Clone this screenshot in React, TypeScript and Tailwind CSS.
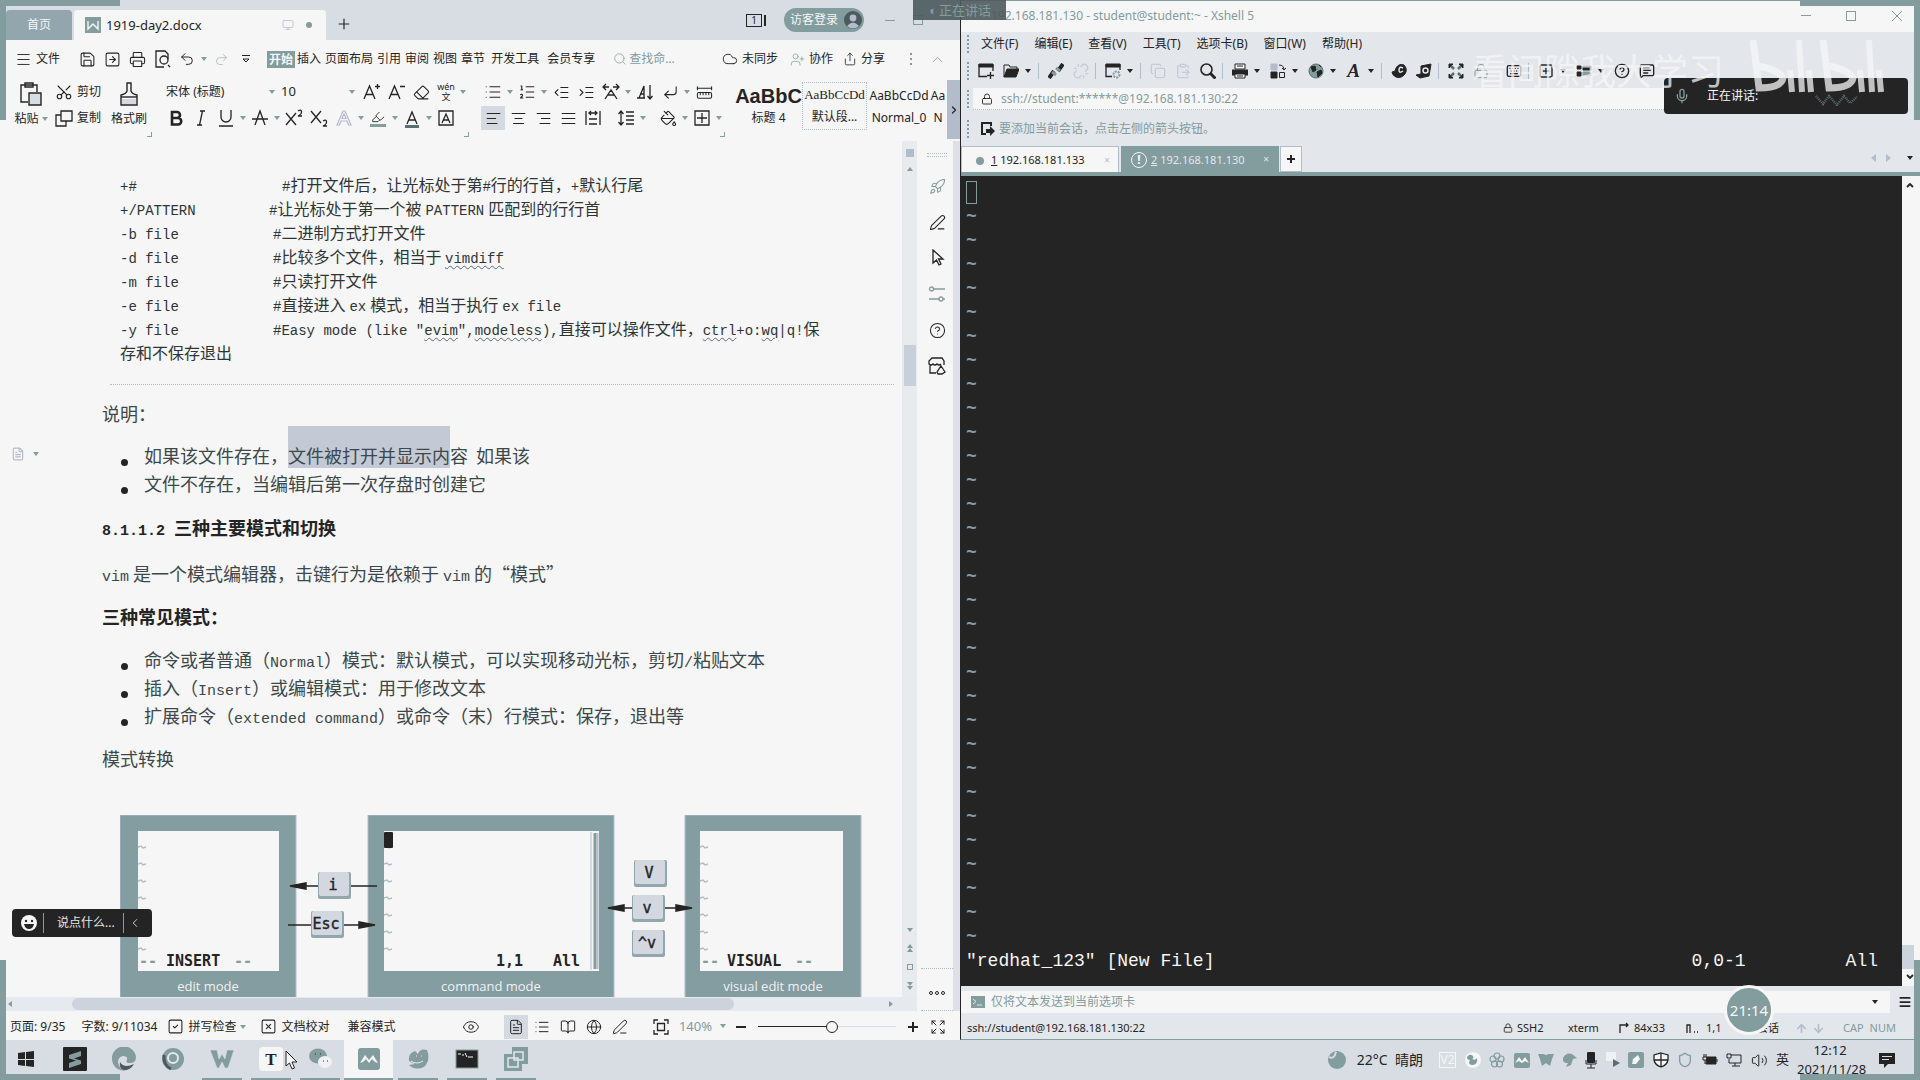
import React from "react";
import {
  AlignCenter, AlignJustify, AlignLeft, AlignRight, ArrowDown, ArrowUp, BookOpen,
  ChevronLeft, ChevronRight, ChevronUp, CircleHelp, ClipboardPaste, Cloud, Copy, CornerDownLeft,
  Eraser, Expand, Eye, FileText, Globe, Highlighter, IndentDecrease, IndentIncrease,
  Keyboard, List, ListOrdered, Lock, Menu, MessageSquareText, Mic, Monitor,
  PaintBucket, PenLine, Printer, Redo2, Rocket, RulerDimensionLine, Save, Scan,
  Scissors, Search, Share, Shield, SquareArrowRight, SquareCheck, SquarePlus, SquareX,
  Undo2, Unlink, UserPlus, Volume2,
} from "lucide-react";

type IconType = React.ComponentType<{ size?: number; strokeWidth?: number; className?: string }>;

function Caret({ dark = false }: { dark?: boolean }) {
  return (
    <svg width="6" height="4" viewBox="0 0 6 4" className={dark ? "shrink-0 text-[#242424]" : "shrink-0 text-[#839c9e]"}>
      <path d="M0 0h6L3 4z" fill="currentColor" />
    </svg>
  );
}

function Tool({ label, drop = false, active = false, children }: { label: string; drop?: boolean; active?: boolean; children: React.ReactNode }) {
  return (
    <button aria-label={label} className={drop ? "flex h-6 w-[34px] shrink-0 items-center" : "flex h-6 w-[25px] shrink-0 items-center"}>
      <span className={active ? "flex h-6 w-6 items-center justify-center bg-[#d5dae1]" : "flex h-6 w-6 items-center justify-center"}>{children}</span>
      {drop && <span className="flex w-2.5 justify-center"><Caret /></span>}
    </button>
  );
}

function Ic({ icon: I, size = 17, className }: { icon: IconType; size?: number; className?: string }) {
  return <I size={size} strokeWidth={1.5} className={className} />;
}

function Letter({ d, children }: { d?: string; children?: React.ReactNode }) {
  return (
    <svg width="18" height="18" viewBox="0 0 18 18" fill="none" stroke="currentColor" strokeWidth="1.3">
      {d && <path d={d} />}
      {children}
    </svg>
  );
}

function Corner() {
  return <span className="-ml-1 h-[5px] w-[5px] shrink-0 self-end border-b border-r border-[#839c9e]" />;
}

function TabStrip() {
  return (
    <div className="flex h-10 items-end bg-[#d8dce3]">
      <button className="ml-1.5 h-[30px] w-[66px] rounded-t-sm bg-[#93a6ad] text-xs text-[#f6f6f6]">首页</button>
      <div className="ml-0.5 flex h-[30px] w-[252px] items-center rounded-t-sm bg-[#f6f6f6] pl-[11px] pr-3.5">
        <svg width="16" height="16" viewBox="0 0 16 16">
          <rect width="16" height="16" fill="#839c9e" />
          <path d="M3 4v8l5-5 5 5V4" fill="none" stroke="#f6f6f6" strokeWidth="1.4" />
        </svg>
        <span className="ml-[5px] flex-1 text-[13px] leading-5">1919-day2.docx</span>
        <Monitor size={12} strokeWidth={1.5} className="text-[#b3bccb]" />
        <span className="ml-3 h-1.5 w-1.5 rounded-full bg-[#839c9e]" />
      </div>
      <button aria-label="新建标签" className="ml-2.5 mb-2 flex h-4 w-4 items-center justify-center">
        <Letter d="M9 3v12M3 9h12" />
      </button>
      <div className="ml-auto flex h-10 items-center pr-[37px]">
        <span className="flex h-[13px] w-4 items-center justify-center border border-[#242424] text-[10px] leading-none">1</span>
        <span className="mr-[18px] ml-0.5 h-[11px] w-0.5 border-x border-[#242424]" />
        <button className="flex h-6 w-20 items-center rounded-full bg-[#839c9e] pl-1.5 text-xs text-[#f6f6f6]">
          访客登录
          <svg width="18" height="18" viewBox="0 0 18 18" className="ml-1.5">
            <circle cx="9" cy="9" r="9" fill="#4c5a5c" />
            <circle cx="9" cy="7" r="3.4" fill="#b3bccb" />
            <path d="M3 15q6-7 12 0-6 5-12 0z" fill="#b3bccb" />
          </svg>
        </button>
        <button aria-label="最小化" className="ml-[21px] h-px w-2.5 bg-[#839c9e]" />
        <button aria-label="最大化" className="ml-[18px] h-2.5 w-2.5 border border-[#839c9e]" />
      </div>
    </div>
  );
}

function WpsMenu() {
  return (
    <div className="flex h-[38px] items-center whitespace-nowrap text-xs">
      <button className="ml-[15px] flex items-center gap-1"><Menu size={17} strokeWidth={1.3} />文件</button>
      <div className="ml-[15px] flex items-center">
        <Tool label="保存"><Ic icon={Save} /></Tool>
        <Tool label="输出为PDF"><Ic icon={SquareArrowRight} /></Tool>
        <Tool label="打印"><Ic icon={Printer} /></Tool>
        <Tool label="打印预览">
          <Letter d="M11 17H3V1h9l3 3v5M15 15l2 2"><circle cx="11" cy="10" r="4" /></Letter>
        </Tool>
        <Tool label="撤销" drop><Ic icon={Undo2} size={16} /></Tool>
        <Tool label="恢复"><Ic icon={Redo2} size={15} className="text-[#b3bccb]" /></Tool>
        <Tool label="更多命令">
          <svg width="10" height="10" viewBox="0 0 10 10" fill="none" stroke="#242424"><path d="M1 1.500h8M2 5l3 3 3-3z" /></svg>
        </Tool>
      </div>
      <nav className="ml-2 flex items-center gap-1">
        <button className="-mr-0.5 bg-[#839c9e] px-0.5 font-bold leading-[17px] text-[#f6f6f6]">开始</button>
        {["插入", "页面布局", "引用", "审阅", "视图", "章节"].map((t) => <button key={t}>{t}</button>)}
        <button className="ml-0.5">开发工具</button>
        <button className="ml-1">会员专享</button>
      </nav>
      <label className="ml-[18px] flex items-center gap-0.5 text-[#839c9e]">
        <Search size={14} strokeWidth={1.3} />
        <input aria-label="查找命令" placeholder="查找命..." className="w-[52px] bg-transparent outline-none placeholder:text-[#839c9e]" />
      </label>
      <div className="ml-auto flex items-center pr-[14px]">
        <button className="flex items-center gap-1"><Cloud size={16} strokeWidth={1.4} />未同步</button>
        <button className="ml-3 flex items-center gap-1"><UserPlus size={15} strokeWidth={1.2} className="text-[#839c9e]" />协作</button>
        <button className="ml-2.5 flex items-center gap-1"><Share size={14} strokeWidth={1.4} />分享</button>
        <span className="ml-[25px] flex flex-col gap-[3px]">
          {[0, 1, 2].map((i) => <i key={i} className="h-0.5 w-0.5 bg-[#839c9e]" />)}
        </span>
        <button aria-label="收起" className="ml-[17px]"><ChevronUp size={17} strokeWidth={1.2} className="text-[#839c9e]" /></button>
      </div>
    </div>
  );
}

function Ribbon() {
  return (
    <div className="flex h-[63px] items-start pt-0.5 text-xs">
      <div className="flex h-[57px] pl-[13px]">
        <div className="flex w-9 flex-col items-center">
          <button aria-label="粘贴" className="flex h-7 items-center">
            <svg width="22" height="24" viewBox="0 0 22 24" fill="none" stroke="currentColor" strokeWidth="1.4">
              <path d="M8 20H1V3h16v7M5 5V1h8v4z" />
              <path d="M9 11h12v12H9z" fill="#d8dce3" />
            </svg>
          </button>
          <button className="flex items-center gap-[3px] whitespace-nowrap leading-[22px]">粘贴<Caret /></button>
        </div>
        <div className="ml-1.5 flex flex-col gap-0.5">
          <button className="flex h-6 items-center gap-1"><Scissors size={18} strokeWidth={1.5} className="-rotate-90" />剪切</button>
          <button className="flex h-6 items-center gap-1"><Letter d="M6 2h11v10H6zM6 6H1v11h10v-5" />复制</button>
        </div>
        <button className="ml-2.5 flex w-9 flex-col items-center">
          <span className="flex h-7 items-center">
            <svg width="20" height="24" viewBox="0 0 20 24" fill="none" stroke="currentColor" strokeWidth="1.4">
              <path d="M8 1h4v8q1 3 6 4v10H2V13q5-1 6-4z" />
              <path d="M2 15h16" />
              <path d="M3 17h14v5H3z" fill="#d5dae1" stroke="none" />
            </svg>
          </span>
          <span className="whitespace-nowrap leading-[22px]">格式刷</span>
        </button>
        <span className="w-1" />
        <Corner />
      </div>

      <div className="ml-2.5 flex h-[57px]">
        <div className="flex flex-col gap-0.5">
          <div className="flex h-6 items-center">
            <button className="flex w-[117px] items-center justify-between pl-1 pr-1">宋体 (标题)<Caret /></button>
            <button className="flex w-20 items-center justify-between pl-0.5 pr-1 text-[13px]">10<Caret /></button>
            <Tool label="增大字号"><Letter d="M2 16L7.500 3 13 16M4 11.500h7M15.500 1v5M13 3.500h5" /></Tool>
            <Tool label="减小字号"><Letter d="M2 16L7.500 3 13 16M4 11.500h7M13 3.500h5" /></Tool>
            <Tool label="清除格式"><Ic icon={Eraser} /></Tool>
            <Tool label="拼音指南" drop>
              <span className="flex flex-col items-center text-[9px] leading-[10px]"><span>wén</span><span>文</span></span>
            </Tool>
          </div>
          <div className="flex h-6 items-center pl-0.5">
            <Tool label="加粗"><Letter><path d="M5 3h5a3 3 0 010 6H5zM5 9h6a3 3 0 010 6.500H5z" strokeWidth="2.600" /></Letter></Tool>
            <Tool label="斜体"><Letter d="M8 2h5M5 16h5M10.500 2l-3 14" /></Tool>
            <Tool label="下划线" drop><Letter d="M4 1v7a5 5 0 0010 0V1M2 17h14" /></Tool>
            <Tool label="删除线" drop><Letter d="M4 16L9 2l5 14M1 10h16" /></Tool>
            <Tool label="上标"><Letter d="M1 4l10 12M11 4L1 16M13 2q3-2 3.500.5T13 7h4" /></Tool>
            <Tool label="下标"><Letter d="M1 2l10 12M11 2L1 14M13 12q3-2 3.500.5T13 17h4" /></Tool>
            <Tool label="文字效果" drop>
              <svg width="16" height="16" viewBox="0 0 16 16" fill="none" stroke="#b3bccb" strokeWidth="1.2"><path d="M1 15L7 1h2l6 14h-2.500l-1.500-4H5l-1.500 4zM6 8.500h4L8 4z" /></svg>
            </Tool>
            <Tool label="突出显示" drop>
              <span className="flex flex-col items-center"><Ic icon={Highlighter} size={14} /><i className="h-[3px] w-4 bg-[#839c9e]" /></span>
            </Tool>
            <Tool label="字体颜色" drop>
              <span className="flex flex-col items-center"><Letter d="M4 15L9 3l5 12M6 11h6" /><i className="-mt-0.5 h-[3px] w-3.5 bg-[#5b6d70]" /></span>
            </Tool>
            <Tool label="字符边框"><Letter d="M2 2h14v14H2zM5 14l4-9 4 9M6.500 11h5" /></Tool>
          </div>
        </div>
        <Corner />
      </div>

      <div className="ml-3 flex h-[57px]">
        <div className="flex flex-col gap-0.5">
          <div className="flex h-6 items-center">
            <Tool label="项目符号" drop><Ic icon={List} size={18} /></Tool>
            <Tool label="编号" drop><Ic icon={ListOrdered} size={18} /></Tool>
            <Tool label="减少缩进"><Ic icon={IndentDecrease} /></Tool>
            <Tool label="增加缩进"><Ic icon={IndentIncrease} /></Tool>
            <Tool label="中文版式" drop><Letter d="M1 4h6M4 1L1 4l3 3M11 4h6M14 1l3 3-3 3M3 16L9 7l6 9M6 12h6" /></Tool>
            <Tool label="排序"><Letter d="M3 15L8 3v12zM4 11h4M14 2v14M11.500 13l2.500 3 2.500-3M1 15h8" /></Tool>
            <Tool label="换行" drop><Ic icon={CornerDownLeft} /></Tool>
            <Tool label="标尺"><Ic icon={RulerDimensionLine} /></Tool>
          </div>
          <div className="flex h-6 items-center">
            <Tool label="左对齐" active><Ic icon={AlignLeft} /></Tool>
            <Tool label="居中"><Ic icon={AlignCenter} /></Tool>
            <Tool label="右对齐"><Ic icon={AlignRight} /></Tool>
            <Tool label="两端对齐"><Ic icon={AlignJustify} /></Tool>
            <Tool label="分散对齐"><Letter d="M2 2v14M16 2v14M5 4h8M7 2L5 4l2 2M11 2l2 2-2 2M5 10h8M5 15h8" /></Tool>
            <span className="w-2" />
            <Tool label="行距" drop><Letter d="M4 2v14M1.500 5L4 2l2.500 3M1.500 13L4 16l2.500-3M9 3h8M9 7h8M9 11h8M9 15h8" /></Tool>
            <span className="w-2" />
            <Tool label="底纹" drop><Ic icon={PaintBucket} /></Tool>
            <Tool label="边框" drop><Letter d="M2 2h14v14H2zM9 4v10M4 9h10" /></Tool>
          </div>
        </div>
        <Corner />
      </div>

      <div className="ml-2.5 flex h-[50px] min-w-0 flex-1 overflow-hidden pt-0.5">
        {[
          { s: "AaBbC", n: "标题 4", c: "font-['Liberation_Sans'] text-xl font-bold", w: "w-[67px]" },
          { s: "AaBbCcDd", n: "默认段...", c: "font-['Liberation_Serif'] text-[13px]", w: "w-[65px] border border-dotted border-[#b3bccb]" },
          { s: "AaBbCcDd", n: "Normal_0", c: "text-xs", w: "w-16" },
          { s: "Aa", n: "N", c: "text-xs", w: "w-3.5" },
        ].map((x, i) => (
          <button key={i} className={`flex h-12 shrink-0 flex-col items-center ${x.w}`}>
            <span className={`flex h-[26px] items-end leading-5 ${x.c}`}>{x.s}</span>
            <span className="whitespace-nowrap leading-6">{x.n}</span>
          </button>
        ))}
      </div>
      <button aria-label="展开" className="flex h-[59px] w-[13px] items-center justify-center bg-[#b3bccb]"><ChevronRight size={12} strokeWidth={2.5} /></button>
    </div>
  );
}

function Mixed({ text, small = false }: { text: string; small?: boolean }) {
  const parts = text.split(/([\x20-\x7e]+)/).filter(Boolean);
  return (
    <>
      {parts.map((p, i) => {
        if (!/^[\x20-\x7e]/.test(p)) return <React.Fragment key={i}>{p}</React.Fragment>;
        const before = i > 0 && /[\u4e00-\u9fff]$/.test(parts[i - 1]) && /^[A-Za-z]/.test(p);
        const after = i < parts.length - 1 && /^[\u4e00-\u9fff]/.test(parts[i + 1]) && /[A-Za-z]$/.test(p);
        return (
          <span key={i} className={`whitespace-pre font-['Liberation_Mono'] leading-none ${small ? "text-sm" : "text-[15px]"} ${before ? "ml-1" : ""} ${after ? "mr-1" : ""}`}>{p}</span>
        );
      })}
    </>
  );
}

function Wavy({ children }: { children: string }) {
  return <span className="font-['Liberation_Mono'] text-sm leading-none underline decoration-[#5b6d70] decoration-wavy decoration-1 underline-offset-2">{children}</span>;
}

function CodeRow({ cmd, w = "w-[153px]", children }: { cmd: string; w?: string; children: React.ReactNode }) {
  return (
    <div className="flex h-6 items-baseline">
      <span className={`${w} shrink-0 whitespace-pre font-['Liberation_Mono'] text-sm`}>{cmd}</span>
      <span className="whitespace-nowrap">{children}</span>
    </div>
  );
}

function Bullet({ children }: { children: React.ReactNode }) {
  return (
    <li className="flex h-7 items-center">
      <span className="mr-4 mt-3.5 h-[7px] w-[7px] shrink-0 rounded-full bg-[#242424]" />
      <span className="whitespace-nowrap">{children}</span>
    </li>
  );
}

function KeyCap({ x, y, label }: { x: number; y: number; label: string }) {
  return (
    <g>
      <rect x={x} y={y} width="33" height="27" rx="2" fill="#92a7ad" />
      <rect x={x + 1} y={y} width="30" height="24" rx="2" fill="#d3d8e0" />
      <text x={x + 15} y={y + 18} textAnchor="middle" fontSize="15" fill="#242424" stroke="#242424" strokeWidth="0.4">{label}</text>
    </g>
  );
}

function ModeBox({ x, w, inner, iw, label }: { x: number; w: number; inner: number; iw: number; label: string }) {
  return (
    <g>
      <rect x={x} y="0" width={w} height="190" fill="#849da0" stroke="#b3bccb" />
      <rect x={inner} y="16" width={iw} height="140" fill="#f6f6f6" />
      {[0, 1, 2, 3, 4, 5, 6].map((i) => (
        <path key={i} d={`M${inner} ${32 + i * 17}l3-1 2 2 3-1`} fill="none" stroke="#b3bccb" strokeWidth="1.5" />
      ))}
      <text x={x + w / 2} y="176" textAnchor="middle" fontSize="13" fill="#f0f1f4" fontFamily="Open Sans">{label}</text>
    </g>
  );
}

function ModeDiagram() {
  return (
    <svg width="742" height="184" viewBox="0 0 742 184" className="shrink-0 font-['DejaVu_Sans_Mono']">
      <ModeBox x={0} w={176} inner={18} iw={141} label="edit mode" />
      <ModeBox x={248} w={246} inner={264} iw={215} label="command mode" />
      <ModeBox x={565} w={176} inner={580} iw={143} label="visual edit mode" />
      <path d="M471 17v138" stroke="#b3bccb" />
      <path d="M475 18v136" stroke="#839c9e" strokeWidth="3" />
      <path d="M477.500 18v136" stroke="#b3bccb" strokeWidth="2" />
      <rect x="264" y="17" width="9" height="16" rx="1" fill="#242424" />
      <g fontSize="15" fontWeight="bold" fill="#242424">
        <text x="19" y="151" fill="#839c9e">--</text>
        <text x="46" y="151">INSERT</text>
        <text x="114" y="151" fill="#839c9e">--</text>
        <text x="376" y="151">1,1</text>
        <text x="433" y="151">All</text>
        <text x="581" y="151" fill="#839c9e">--</text>
        <text x="607" y="151">VISUAL</text>
        <text x="675" y="151" fill="#839c9e">--</text>
      </g>
      <g stroke="#242424" strokeWidth="1.5" fill="#242424">
        <path d="M180 71h77M168 110h76M498 93h64" />
        <path d="M170 71l16-3v6zM255 110l-16-3v6zM488 93l16-3v6zM572 93l-16-3v6z" />
      </g>
      <KeyCap x={198} y={57} label="i" />
      <KeyCap x={191} y={96} label="Esc" />
      <KeyCap x={514} y={45} label="V" />
      <KeyCap x={512} y={80} label="v" />
      <KeyCap x={512} y={115} label="^v" />
    </svg>
  );
}

function DocumentPage() {
  return (
    <article className="relative flex min-h-0 flex-1 flex-col overflow-hidden pl-[102px] pt-[31px] font-['Noto_Sans_CJK_SC',sans-serif] text-lg leading-7 text-[#3c484b]">
      <div className="pl-[18px] text-base leading-6 text-[#2e3537]">
        <CodeRow cmd="+#" w="w-[162px]"><Mixed small text="#打开文件后，让光标处于第#行的行首，+默认行尾" /></CodeRow>
        <CodeRow cmd="+/PATTERN" w="w-[149px]"><Mixed small text="#让光标处于第一个被PATTERN匹配到的行行首" /></CodeRow>
        <CodeRow cmd="-b file"><Mixed small text="#二进制方式打开文件" /></CodeRow>
        <CodeRow cmd="-d file"><Mixed small text="#比较多个文件，相当于" /> <Wavy>vimdiff</Wavy></CodeRow>
        <CodeRow cmd="-m file"><Mixed small text="#只读打开文件" /></CodeRow>
        <CodeRow cmd="-e file"><Mixed small text="#直接进入ex模式，相当于执行ex file" /></CodeRow>
        <CodeRow cmd="-y file">
          <Mixed small text={'#Easy mode (like "'} /><Wavy>evim</Wavy><Mixed small text={'",'} /><Wavy>modeless</Wavy>
          <Mixed small text="),直接可以操作文件，" /><Wavy>ctrl</Wavy><Mixed small text="+o:" /><Wavy>wq</Wavy><Mixed small text="|q!保" />
        </CodeRow>
        <p>存和不保存退出</p>
      </div>
      <hr className="mr-2 ml-2 mt-5 border-dotted border-[#b3bccb]" />
      <p className="mt-3.5">说明：</p>
      <ul className="mt-3.5 pl-[19px]">
        <Bullet>如果该文件存在，<span className="bg-[#c3cad6] pt-4">文件被打开并显示内</span>容&nbsp; 如果该</Bullet>
        <Bullet>文件不存在，当编辑后第一次存盘时创建它</Bullet>
      </ul>
      <h3 className="mt-4 h-7 font-bold text-[#242424]"><Mixed text="8.1.1.2 三种主要模式和切换" /></h3>
      <p className="mt-[18px] h-7"><Mixed text="vim是一个模式编辑器，击键行为是依赖于vim的“模式”" /></p>
      <h4 className="mt-[15px] font-bold text-[#242424]">三种常见模式：</h4>
      <ul className="mt-[15px] pl-[19px]">
        <Bullet><Mixed text="命令或者普通（Normal）模式：默认模式，可以实现移动光标，剪切/粘贴文本" /></Bullet>
        <Bullet><Mixed text="插入（Insert）或编辑模式：用于修改文本" /></Bullet>
        <Bullet><Mixed text="扩展命令（extended command）或命令（末）行模式：保存，退出等" /></Bullet>
      </ul>
      <p className="mt-[15px]">模式转换</p>
      <div className="mt-[43px] pl-[18px]"><ModeDiagram /></div>
      <span className="absolute left-[11px] top-[306px] flex items-center gap-2 text-[#b3bccb]">
        <FileText size={14} strokeWidth={2} /><Caret />
      </span>
    </article>
  );
}

function Sliders() {
  return (
    <Letter>
      <circle cx="3.500" cy="4" r="2" /><path d="M5.500 4H17M1 14h10M15 14h2" /><circle cx="13" cy="14" r="2" />
    </Letter>
  );
}

function SideTools() {
  const items: [string, React.ReactNode, string][] = [
    ["推荐功能", <Ic icon={Rocket} />, "text-[#839c9e]"],
    ["样式", <Ic icon={PenLine} />, ""],
    ["选择", <Letter d="M5 1v13l3.500-3 2.500 5 2-1-2.500-5H15z" />, ""],
    ["属性", <Sliders />, "text-[#839c9e]"],
    ["帮助", <Ic icon={CircleHelp} />, ""],
    ["更多应用", <Letter d="M8 16H2V7M16 8V4l-2-3H4L1 4v3q2 2 4 0 2 2 4 0 2 2 4 0M13 9l4 6-3 2h-4l-1-2z" />, ""],
  ];
  return (
    <aside className="flex w-9 flex-col items-center pl-1">
      <span className="mt-3 h-1 w-5 border-y border-dotted border-[#b3bccb]" />
      <div className="mt-[11px] flex flex-col">
        {items.map(([label, art, c]) => (
          <button key={label} aria-label={label} className={`flex h-9 w-8 items-center justify-center ${c}`}>{art}</button>
        ))}
      </div>
      <button aria-label="更多" className="mt-auto flex h-[43px] w-full items-center justify-center gap-0.5 border-y border-dotted border-[#b3bccb] pt-1.5">
        {[0, 1, 2].map((i) => <i key={i} className="h-1 w-1 rounded-full border border-[#242424]" />)}
      </button>
    </aside>
  );
}

function WpsStatus() {
  return (
    <footer className="flex h-[29px] items-center whitespace-nowrap pl-2.5 pt-0.5 text-xs">
      <span>页面: 9/35</span>
      <span className="ml-4">字数: 9/11034</span>
      <button className="ml-2.5 flex items-center gap-1"><Ic icon={SquareCheck} />拼写检查<Caret /></button>
      <button className="ml-3.5 flex items-center gap-1"><Ic icon={SquareX} />文档校对</button>
      <span className="ml-[18px]">兼容模式</span>
      <div className="ml-auto flex items-center pr-3.5">
        <Eye size={18} strokeWidth={1.3} />
        <span className="ml-6 flex items-center gap-px">
          <Tool label="页面视图" active><Ic icon={FileText} size={16} /></Tool>
          <Tool label="大纲"><Ic icon={List} size={16} /></Tool>
          <Tool label="阅读版式"><Ic icon={BookOpen} size={16} /></Tool>
          <Tool label="Web版式"><Ic icon={Globe} size={16} /></Tool>
          <Tool label="写作模式"><Ic icon={PenLine} size={16} /></Tool>
        </span>
        <span className="ml-5">
          <svg width="16" height="16" viewBox="0 0 16 16" fill="none" stroke="#242424" strokeWidth="1.3"><path d="M1 5V1h4M11 1h4v4M15 11v4h-4M5 15H1v-4M4.500 4.500h7v7h-7z" /></svg>
        </span>
        <button className="ml-2.5 flex items-center gap-2 text-[13px] text-[#839c9e]">140%<Caret /></button>
        <button aria-label="缩小" className="ml-2.5 h-0.5 w-2.5 bg-[#242424]" />
        <input
          aria-label="缩放"
          type="range"
          defaultValue={54}
          className="ml-3 h-3 w-[138px] appearance-none bg-[linear-gradient(to_right,#242424_50%,#d8dce3_50%)] bg-[length:100%_1px] bg-center bg-no-repeat [&::-webkit-slider-thumb]:h-3 [&::-webkit-slider-thumb]:w-3 [&::-webkit-slider-thumb]:appearance-none [&::-webkit-slider-thumb]:rounded-full [&::-webkit-slider-thumb]:border [&::-webkit-slider-thumb]:border-[#242424] [&::-webkit-slider-thumb]:bg-[#f6f6f6]"
        />
        <button aria-label="放大" className="ml-2"><Letter><path d="M9 4v10M4 9h10" strokeWidth="2" /></Letter></button>
        <button aria-label="全屏" className="ml-2"><Ic icon={Expand} size={16} /></button>
      </div>
    </footer>
  );
}

function WriterWindow() {
  return (
    <section className="relative flex w-1/2 flex-col bg-[#f6f6f6]">
      <TabStrip />
      <WpsMenu />
      <Ribbon />
      <div className="flex min-h-0 flex-1">
        <div className="flex min-w-0 flex-1 flex-col">
          <div className="flex min-h-0 flex-1">
            <DocumentPage />
            <div className="flex w-[15px] flex-col items-center bg-[#e8eaee] text-[#839c9e]">
              <span className="mt-2 h-2 w-2 bg-[#b3bccb]" />
              <span className="mt-2.5 rotate-180"><Caret /></span>
              <span className="mt-[174px] h-[41px] w-3 bg-[#c9cfd9]" />
              <span className="mt-auto mb-[7px] flex flex-col items-center gap-3">
                <Caret />
                <span className="rotate-180"><Caret /><Caret /></span>
                <i className="h-1.5 w-1.5 border border-[#839c9e]" />
                <span><Caret /><Caret /></span>
              </span>
            </div>
          </div>
          <div className="flex h-3.5 items-center bg-[#e6e9ed] pl-2 pr-6">
            <i className="border-y-[3px] border-r-4 border-y-transparent border-r-[#839c9e]" />
            <span className="ml-[60px] h-3 w-[662px] rounded-full bg-[#cdd3dc]" />
            <i className="ml-auto border-y-[3px] border-l-4 border-y-transparent border-l-[#839c9e]" />
          </div>
        </div>
        <SideTools />
        <span className="w-[7px] bg-[#dde1e7]" />
      </div>
      <WpsStatus />
      <div className="absolute bottom-[103px] left-3 flex h-7 items-center rounded-sm bg-[#242424] text-xs text-[#e4e6ea]">
        <svg width="16" height="16" viewBox="0 0 16 16" className="ml-[9px]">
          <circle cx="8" cy="8" r="8" fill="#f6f6f6" />
          <path d="M3 9h10q-1 5-5 5T3 9z" fill="#242424" />
          <circle cx="5" cy="6" r="1.200" fill="#242424" /><circle cx="11" cy="6" r="1.200" fill="#242424" />
        </svg>
        <i className="ml-1.5 h-5 w-px bg-[#839c9e]" />
        <button className="ml-[13px]">说点什么...</button>
        <i className="ml-2 h-5 w-px bg-[#839c9e]" />
        <button aria-label="收起" className="ml-1 mr-2.5"><ChevronLeft size={14} strokeWidth={1.5} /></button>
      </div>
    </section>
  );
}

function XTool({ label, icon: I, drop = false, faint = false, children }: { label: string; icon?: IconType; drop?: boolean; faint?: boolean; children?: React.ReactNode }) {
  return (
    <button aria-label={label} className={drop ? "flex w-[38px] shrink-0 items-center" : "flex w-[25px] shrink-0 items-center"}>
      <span className="flex w-[25px] justify-center">{I ? <I size={16} strokeWidth={2} className={faint ? "text-[#c6ccd7]" : ""} /> : children}</span>
      {drop && <span className="flex w-2.5 justify-center"><Caret dark /></span>}
    </button>
  );
}

function Sep() {
  return <span className="mr-1 ml-0.5 h-4 w-px shrink-0 bg-[#b3bccb]" />;
}

function Grip() {
  return <span className="ml-1.5 mr-1 h-[18px] w-0.5 shrink-0 border-l-2 border-dotted border-[#839c9e]" />;
}

function Glyph({ children }: { children: React.ReactNode }) {
  return <svg width="16" height="16" viewBox="0 0 16 16" fill="none" stroke="#242424">{children}</svg>;
}

function ShellWindow() {
  return (
    <section className="relative flex w-1/2 flex-col border-b border-l border-b-[#839c9e] border-l-[#242424] bg-[#e3e6eb] text-xs">
      <header className="flex h-8 items-center border-t border-[#839c9e] bg-[#f6f6f6] pb-0.5 pl-[30px] pr-[18px] text-[#839c9e]">
        <h1 className="flex-1">192.168.181.130 - student@student:~ - Xshell 5</h1>
        <button aria-label="最小化" className="h-px w-2.5 bg-[#839c9e]" />
        <button aria-label="最大化" className="ml-[35px] h-2.5 w-2.5 border border-[#839c9e]" />
        <button aria-label="关闭" className="ml-9">
          <svg width="10" height="10" viewBox="0 0 10 10" stroke="#839c9e"><path d="M0 0l10 10M10 0L0 10" /></svg>
        </button>
      </header>
      <div className="flex h-6 items-center">
        <Grip />
        <nav className="ml-2 flex gap-4">
          {["文件(F)", "编辑(E)", "查看(V)", "工具(T)", "选项卡(B)", "窗口(W)", "帮助(H)"].map((t) => <button key={t}>{t}</button>)}
        </nav>
      </div>
      <div className="flex h-[30px] items-center">
        <Grip />
        <XTool label="新建会话"><Glyph><path d="M9 13.500H1V2h14v6M12.500 9v7M9 12.500h7" strokeWidth="1.300" /><path d="M1 1h14v3H1z" fill="#242424" /></Glyph></XTool>
        <XTool label="打开" drop><Glyph><path d="M1 14V2h5l1 2h7v2" /><path d="M4 6h12l-3 8H1z" fill="#242424" /></Glyph></XTool>
        <Sep />
        <XTool label="重新连接"><Glyph><path d="M1 15L6 8M10 8l5-7" strokeWidth="4" /><path d="M4 9l4 3M8 5l4 3" stroke="#839c9e" strokeWidth="3" /></Glyph></XTool>
        <XTool label="断开" icon={Unlink} faint />
        <Sep />
        <XTool label="属性" drop><Glyph><path d="M7 13.500H1V2h14v5" strokeWidth="1.300" /><path d="M1 1h14v3H1z" fill="#242424" /><circle cx="11.500" cy="11.500" r="3" stroke="#839c9e" strokeWidth="2" strokeDasharray="2 1" /></Glyph></XTool>
        <Sep />
        <XTool label="复制" icon={Copy} faint />
        <XTool label="粘贴" icon={ClipboardPaste} faint />
        <XTool label="查找"><Glyph><circle cx="6.500" cy="6.500" r="5.500" strokeWidth="1.600" /><path d="M10.500 10.500l5 5" strokeWidth="3" /></Glyph></XTool>
        <Sep />
        <XTool label="打印" drop><Glyph><path d="M3 1h10v5H3z" fill="#f6f6f6" /><path d="M0 7h16v5H0z" fill="#242424" /><path d="M3 11h10v4H3z" fill="#f6f6f6" /><path d="M5 3h6M5 13h6" /></Glyph></XTool>
        <XTool label="传输" drop><Glyph><path d="M1 9h6v6H1z" fill="#242424" /><path d="M9.500 9.500h5v5h-5z" /><path d="M1 1h6v6H1z" fill="#b3bccb" stroke="#b3bccb" /><path d="M9 2q5 0 5 5M12 5l2 2 2-2" /></Glyph></XTool>
        <XTool label="编码" drop><Glyph><circle cx="8" cy="8" r="7" fill="#839c9e" stroke="#5b6d70" /><path d="M3 4l4-1 1 4-3 2zM9 9l4-2 1 3-4 4zM11 2l2 2" fill="#242424" /></Glyph></XTool>
        <XTool label="字体" drop><span className="font-['Liberation_Serif'] text-[19px] font-bold italic leading-4">A</span></XTool>
        <Sep />
        <XTool label="Xshell"><Glyph><path d="M1 9q4 0 4-4 3-5 8-3 4 4 1 9-4 5-9 3-4-2-4-5z" fill="#242424" /><path d="M12 5q-4-2-4 2t4 1" stroke="#e3e6eb" strokeWidth="1.500" /></Glyph></XTool>
        <XTool label="Xftp"><Glyph><path d="M5 3l10-2-2 12-9 2-4-3 5-1z" fill="#242424" /><circle cx="9.500" cy="7.500" r="2.500" stroke="#e3e6eb" strokeWidth="1.500" /></Glyph></XTool>
        <Sep />
        <XTool label="全屏"><Glyph><path d="M1 5V1h4zM11 1h4v4zM15 11v4h-4zM5 15H1v-4z" fill="#242424" /><path d="M3 3l3 3M13 3l-3 3M13 13l-3-3M3 13l3-3" stroke="#5b6d70" strokeWidth="2.500" /></Glyph></XTool>
        <XTool label="锁定"><Lock size={16} strokeWidth={1.5} className="text-[#839c9e]" /></XTool>
        <span className="w-2" />
        <XTool label="键盘" icon={Keyboard} />
        <Sep />
        <XTool label="添加" icon={SquarePlus} drop />
        <XTool label="布局" drop><Glyph><path d="M1 3h4v3H1zM1 9h4v4H1zM7 3h8v4H7z" fill="#242424" /><path d="M7 9h8v4H7z" fill="#839c9e" stroke="#839c9e" /></Glyph></XTool>
        <XTool label="帮助" icon={CircleHelp} />
        <XTool label="反馈" icon={MessageSquareText} />
      </div>
      <div className="flex h-[25px] items-center pt-px">
        <Grip />
        <label className="mr-5 flex h-[22px] flex-1 items-center border-b border-dotted border-[#b3bccb] bg-[#f6f6f6] pl-2">
          <Lock size={12} strokeWidth={1.8} />
          <input aria-label="地址" defaultValue="ssh://student:******@192.168.181.130:22" className="ml-2 w-80 bg-transparent text-[#839c9e] outline-none" />
        </label>
      </div>
      <div className="flex h-[35px] items-center text-[#839c9e]">
        <Grip />
        <svg width="14" height="14" viewBox="0 0 14 14" className="ml-2"><path d="M5 12H1V1h9v3" fill="none" stroke="#242424" strokeWidth="2" /><path d="M5 7h4V4l5 5-5 5v-3H5z" fill="#242424" /></svg>
        <span className="ml-1">要添加当前会话，点击左侧的箭头按钮。</span>
      </div>
      <div className="flex h-[26px] items-end text-[11px]">
        <button className="flex h-[26px] w-[158px] items-center border border-[#b3bccb] border-b-0 bg-[#f6f6f6] pl-3.5 pt-0.5">
          <i className="mr-[7px] h-2 w-2 rounded-full bg-[#839c9e]" />
          <span className="flex-1 text-left"><u>1</u> 192.168.181.133</span>
          <span className="mr-2 text-[10px] text-[#b3bccb]">×</span>
        </button>
        <button className="ml-0.5 flex h-[26px] w-[158px] items-center bg-[#839c9e] pl-2.5 pt-0.5 text-[#e4e7ec]">
          <i className="mr-1 flex h-4 w-4 items-center justify-center rounded-full border border-[#f6f6f6] text-xs font-bold not-italic leading-none text-[#f6f6f6]">!</i>
          <span className="flex-1 text-left"><u>2</u> 192.168.181.130</span>
          <span className="mr-2.5 text-[10px]">×</span>
        </button>
        <button aria-label="新建选项卡" className="ml-px flex h-[26px] w-[22px] items-center justify-center border border-[#b3bccb] bg-[#f6f6f6]">
          <svg width="8" height="8" viewBox="0 0 8 8" stroke="#242424" strokeWidth="2"><path d="M4 0v8M0 4h8" /></svg>
        </button>
        <span className="mb-2.5 ml-auto mr-[7px] flex items-center gap-2.5">
          <i className="border-y-4 border-r-[5px] border-y-transparent border-r-[#b3bccb]" />
          <i className="border-y-4 border-l-[5px] border-y-transparent border-l-[#b3bccb]" />
          <span className="ml-1.5"><Caret dark /></span>
        </span>
      </div>
      <div className="h-1 bg-[#839c9e]" />
      <div className="flex min-h-0 flex-1 bg-[#242424]">
        <div className="flex-1 overflow-hidden pl-[5px] pt-[5px] font-['Liberation_Mono'] text-lg leading-6 text-[#f6f6f6]">
          <div className="h-6"><span className="block h-[23px] w-[11px] border border-[#839c9e]" /></div>
          {Array.from({ length: 31 }, (_, i) => <div key={i} className="font-bold text-[#839c9e]">~</div>)}
          <div className="flex whitespace-pre pr-6">
            <span className="flex-1">"redhat_123" [New File]</span>
            <span className="w-[154px]">0,0-1</span>
            <span>All</span>
          </div>
        </div>
        <div className="flex w-[18px] flex-col items-start justify-between bg-[#f6f6f6]">
          <svg width="14" height="17" viewBox="0 0 14 17" fill="none" stroke="#242424" strokeWidth="1.800"><path d="M5 11l3-3 3 3" /></svg>
          <span className="flex flex-col">
            <i className="h-6 w-3 bg-[#cdd3dc]" />
            <svg width="12" height="17" viewBox="0 0 12 17" fill="none" stroke="#242424" strokeWidth="1.800"><path d="M5 6l3 3 3-3" /></svg>
          </span>
        </div>
      </div>
      <div className="flex h-[27px] items-center pt-[5px]">
        <label className="flex h-full flex-1 items-center bg-[#f6f6f6] pl-2.5">
          <svg width="14" height="12" viewBox="0 0 14 12"><rect width="14" height="12" fill="#839c9e" /><path d="M2 3l3 2.500-3 2.500M6 9h5" stroke="#e4e7ec" fill="none" /></svg>
          <input aria-label="发送文本" placeholder="仅将文本发送到当前选项卡" className="ml-1.5 flex-1 bg-transparent outline-none placeholder:text-[#839c9e]" />
          <Caret dark />
          <span className="w-3" />
        </label>
        <button aria-label="菜单" className="mx-2"><Menu size={14} strokeWidth={3} /></button>
      </div>
      <footer className="flex h-[26px] items-center whitespace-nowrap pl-1.5 pr-6 pt-1 text-[11px]">
        <span className="flex-1">ssh://student@192.168.181.130:22</span>
        <Lock size={10} strokeWidth={2} />
        <span className="ml-1 w-[51px]">SSH2</span>
        <span className="w-12">xterm</span>
        <Letter d="M4 14V6h8M10 4l2 2-2 2" />
        <span className="w-[50px]">84x33</span>
        <Letter d="M3 14V6h3v8M10 13h1M13 13h1" />
        <span className="w-[34px] pl-1">1,1</span>
        <span className="w-[43px] text-right">会话</span>
        <ArrowUp size={13} strokeWidth={3} className="ml-4 text-[#b3bccb]" />
        <ArrowDown size={13} strokeWidth={3} className="ml-1 text-[#b3bccb]" />
        <span className="ml-[18px] text-[#839c9e]">CAP</span>
        <span className="ml-1.5 text-[#839c9e]">NUM</span>
      </footer>

      <div className="absolute right-3 top-[78px] flex h-9 w-[244px] items-center overflow-hidden rounded bg-[#242424] pl-2.5 text-xs text-[#f6f6f6]">
        <Mic size={16} strokeWidth={2} className="text-[#839c9e]" />
        <span className="ml-[17px]">正在讲话:</span>
        <svg width="44" height="12" viewBox="0 0 44 12" className="ml-[57px] mt-2"><path d="M1 2l7 8 6-8 8 9 7-9 6 7 7-6" fill="none" stroke="#5b6d70" strokeWidth="2.500" strokeDasharray="1 1" /></svg>
      </div>
      <div className="absolute right-[196px] top-[54px] text-4xl leading-9 text-[#f6f6f6]/75">看间隙我大学习</div>
      <svg className="absolute right-8 top-9 opacity-75" width="140" height="64" viewBox="0 0 140 64" fill="none" stroke="#f6f6f6" strokeWidth="7">
        {[0, 70].map((x) => (
          <g key={x} transform={`translate(${x} 0)`}>
            <path d="M5 4l6 48q22 0 24-10-4-8-24-12" />
            <path d="M42 34l2 22M51 4l3 52M61 34l2 22" strokeWidth="6" />
          </g>
        ))}
      </svg>
      <div className="absolute bottom-1 right-[146px] flex h-[50px] w-[50px] items-center justify-center rounded-full border-[3px] border-[#f6f6f6] bg-[#839c9e] text-[15px] text-[#f6f6f6]">21:14</div>
    </section>
  );
}

const apps: { name: string; open: boolean; art: React.ReactNode }[] = [
  { name: "开始", open: false, art: <path d="M4 6l7-1v7H4zM12 5l8-1v8h-8zM4 13h7v6l-7-1zM12 13h8v7l-8-1z" fill="#242424" /> },
  { name: "Sublime Text", open: false, art: <><rect width="24" height="24" rx="1" fill="#242424" /><path d="M6 8l12-4v5l-7 2.500 7 2V17L6 21v-5l7-2.500-7-2z" fill="#839c9e" /></> },
  { name: "Edge", open: false, art: <><path d="M0 13A12 12 0 0124 10q0 6-6 6-5 0-3-3 1-4-4-4-5 1-5 6 1 7 7 9Q1 23 0 13z" fill="#839c9e" /><path d="M8 15q4 7 14 2-4 7-11 6-4-2-3-8z" fill="#4c5a5c" /></> },
  { name: "Chrome", open: false, art: <><circle cx="12" cy="12" r="11" fill="#839c9e" /><path d="M3 8q-1 10 7 14" stroke="#4c5a5c" strokeWidth="3" fill="none" /><circle cx="12" cy="11" r="5" fill="#839c9e" stroke="#e4e7ec" strokeWidth="2" /></> },
  { name: "WPS", open: true, art: <path d="M0 3h7l2 9 3-5 3 5 2-9h7l-6 18h-3l-3-6-3 6H7z" fill="#839c9e" stroke="#d8dce3" strokeWidth="0.600" /> },
  { name: "Typora", open: true, art: <><rect x="0" y="0" width="24" height="24" rx="4" fill="#f6f6f6" /><text x="12" y="18" textAnchor="middle" fontSize="17" fontWeight="bold" fontFamily="Liberation Serif" fill="#242424">T</text></> },
  { name: "微信", open: true, art: <><ellipse cx="10" cy="9" rx="9" ry="7.500" fill="#839c9e" /><ellipse cx="17" cy="15" rx="7" ry="6" fill="#f0f1f4" /><path d="M7 7h1M12 7h1M15 14h1M19 14h1" stroke="#242424" /></> },
  { name: "腾讯会议", open: true, art: <><rect x="1" y="1" width="22" height="22" rx="3" fill="#839c9e" /><path d="M3 16l5-8 4 5 4-5 5 8-3-1-3-3-3 4-3-4-3 3z" fill="#f6f6f6" /></> },
  { name: "飞秋", open: true, art: <><path d="M3 14Q2 6 9 4l3 3q2-6 9-4 4 10-3 17-9 4-15-2l6-1z" fill="#839c9e" /><path d="M5 14q6 4 12 0M10 9h1M15 9h1" stroke="#e4e7ec" fill="none" /></> },
  { name: "命令提示符", open: true, art: <><rect x="1" y="3" width="22" height="18" fill="#242424" stroke="#839c9e" /><path d="M3 7h3M8 7v2M10 6l2 4M13 10h5" stroke="#f6f6f6" /></> },
  { name: "VMware", open: true, art: <><path d="M8 0h16v17h-6v7H0V7h8z" fill="#839c9e" /><path d="M4 11h10v9H4zM10 5h9v8h-9z" stroke="#e4e7ec" strokeWidth="1.500" fill="none" /></> },
];

function Taskbar() {
  return (
    <footer className="flex h-10 items-center bg-[#d8dce3] pl-px">
      {apps.map((a) => (
        <button
          key={a.name}
          aria-label={a.name}
          className={a.name === "腾讯会议"
            ? "flex h-10 w-[49px] flex-col items-center justify-between bg-[#f6f6f6] pt-[7px]"
            : "flex h-10 w-[49px] flex-col items-center justify-between pt-[7px]"}
        >
          <svg width="24" height="24" viewBox="0 0 24 24">{a.art}</svg>
          {a.open && <i className={a.name === "腾讯会议" ? "h-0.5 w-full bg-[#839c9e]" : "h-0.5 w-10 bg-[#839c9e]"} />}
        </button>
      ))}
      <div className="ml-auto flex items-center pr-[25px]">
        <svg width="18" height="18" viewBox="0 0 18 18"><circle cx="9" cy="9" r="9" fill="#839c9e" /><path d="M1 6q5 3 7-5" stroke="#d8dce3" strokeWidth="2" fill="none" /></svg>
        <span className="ml-[11px] whitespace-pre text-sm">22°C  晴朗</span>
        <div className="ml-4 flex w-[329px] items-center justify-between">
          <span className="flex h-4 w-[17px] items-center justify-center border border-[#f6f6f6] text-xs leading-none text-[#f6f6f6]">V2</span>
          <svg width="16" height="16" viewBox="0 0 16 16"><circle cx="8" cy="8" r="8" fill="#f6f6f6" /><path d="M2 5q3-4 6-1 1 3-1 3 3 2 5-1 1 6-4 7-6 0-3-5-3 0-3-3z" fill="#839c9e" /></svg>
          <svg width="16" height="16" viewBox="0 0 16 16" fill="none" stroke="#839c9e" strokeWidth="1.200">
            <circle cx="8" cy="4" r="3" /><circle cx="12" cy="7" r="3" /><circle cx="10.500" cy="12" r="3" /><circle cx="5.500" cy="12" r="3" /><circle cx="4" cy="7" r="3" />
          </svg>
          <svg width="16" height="16" viewBox="0 0 16 16"><rect width="16" height="15" y="1" rx="2" fill="#839c9e" /><path d="M1 11l4-6 3 4 3-4 4 6-4-2-3 2-3-2z" fill="#f6f6f6" /></svg>
          <svg width="16" height="16" viewBox="0 0 16 16"><path d="M0 2h5l3 1 3-1h5l-2 5-2 7-4-3-4 3-2-7z" fill="#839c9e" /></svg>
          <svg width="14" height="14" viewBox="0 0 14 14"><path d="M0 5q3-6 9-4l5 4-4 1-2 6-5 2 2-4q-6 0-5-5z" fill="#839c9e" /></svg>
          <svg width="12" height="17" viewBox="0 0 12 17"><rect x="2" width="8" height="11" rx="1" fill="#242424" /><path d="M1 8v4h10V8M6 12v4M2 16h8" stroke="#242424" fill="none" /></svg>
          <svg width="14" height="16" viewBox="0 0 14 16"><rect width="10" height="9" fill="#f0f1f4" /><path d="M7 7l7 4-7 4z" fill="#5b6d70" /></svg>
          <svg width="16" height="16" viewBox="0 0 16 16"><rect width="16" height="16" rx="2" fill="#839c9e" /><path d="M4 12l1-5 5-4 2 4-4 5z" fill="#f6f6f6" /></svg>
          <svg width="16" height="16" viewBox="0 0 16 16"><path d="M8 1l7 2v5q-1 5-7 7-6-2-7-7V3zM8 1v14M1 8h14" fill="#f6f6f6" stroke="#242424" strokeWidth="1.300" /></svg>
          <Shield size={16} strokeWidth={2} className="text-[#839c9e]" />
          <svg width="16" height="12" viewBox="0 0 16 12"><path d="M5 3h9v7H4z" fill="#242424" stroke="#242424" /><path d="M15 5v3M2 0v3M4 0v3M1 3h4v3H1zM3 6v4" stroke="#242424" fill="none" /></svg>
          <svg width="16" height="14" viewBox="0 0 16 14" fill="none" stroke="#242424"><path d="M5 2h10v8H3V6M6 13h8M9 10v3M1 1h4v4H1z" /></svg>
          <Volume2 size={17} strokeWidth={1.4} />
        </div>
        <button className="ml-2 text-[13px]">英</button>
        <time className="ml-2 w-[66px] text-center text-[13px] leading-[19px]">12:12<br />2021/11/28</time>
        <button aria-label="通知" className="ml-4 w-4">
          <svg width="16" height="16" viewBox="0 0 16 16"><path d="M0 1h16v11H9l-4 4v-4H0z" fill="#242424" /><path d="M3 4.500h10M3 7.500h7" stroke="#d8dce3" /></svg>
        </button>
      </div>
    </footer>
  );
}

export default function App() {
  return (
    <main className="relative flex h-screen flex-col overflow-hidden bg-[#f6f6f6] font-['Noto_Sans','Noto_Sans_CJK_SC',sans-serif] text-[#242424]">
      <div className="flex min-h-0 flex-1">
        <WriterWindow />
        <ShellWindow />
      </div>
      <Taskbar />
      <div className="absolute left-[913px] top-0 flex h-5 w-[93px] items-center justify-center bg-[#4c5a5c]/90 text-[13px] leading-none text-[#839c9e]">◖ 正在讲话</div>
      <i className="pointer-events-none absolute left-0 top-0 h-[120px] w-[120px] border-l-[6px] border-t-[6px] border-[#839c9e]" />
      <i className="pointer-events-none absolute right-0 top-0 h-[120px] w-[120px] border-r-[6px] border-t-[6px] border-[#839c9e]" />
      <i className="pointer-events-none absolute bottom-0 left-0 h-[120px] w-[120px] border-b-[6px] border-l-[6px] border-[#839c9e]" />
      <i className="pointer-events-none absolute bottom-0 right-0 h-[120px] w-[120px] border-b-[6px] border-r-[6px] border-[#839c9e]" />
      <svg className="pointer-events-none absolute bottom-2.5 left-[285px]" width="13" height="20" viewBox="0 0 13 20"><path d="M1 1v15l3.500-3 2.500 6 2.500-1-2.500-6h5z" fill="#f6f6f6" stroke="#242424" /></svg>
    </main>
  );
}
